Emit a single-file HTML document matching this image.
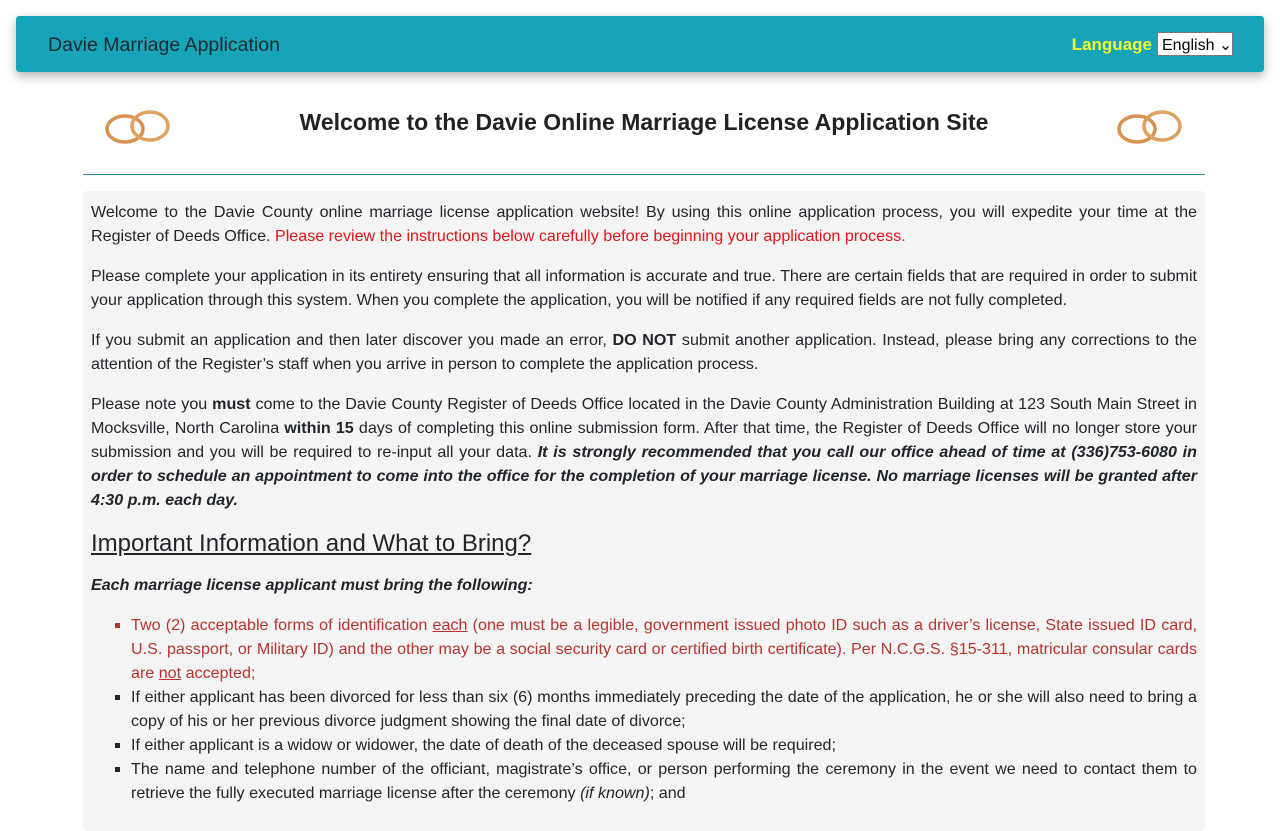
<!DOCTYPE html>
<html><head><meta charset="utf-8"><style>
body{margin:0;background:#fff;font-family:"Liberation Sans",sans-serif;color:#212529;}
.nav{position:absolute;left:16px;top:16px;width:1248px;height:56px;background:#17a3b8;border-radius:3px;box-shadow:0 4px 10px rgba(0,0,0,.3);}
.nav .t{position:absolute;left:32px;top:18px;font-size:19.5px;color:#1d2b30;}
.nav .l{position:absolute;right:112px;top:19px;font-size:17px;font-weight:bold;color:#f2ff2e;}
.nav .s{position:absolute;right:31px;top:16px;width:76px;height:24px;background:#fff;border:1px solid #777;font-size:16px;color:#000;box-sizing:border-box;padding:2px 4px;white-space:nowrap;}
h1{position:absolute;left:0;width:1288px;top:109px;margin:0;text-align:center;font-size:23px;font-weight:bold;color:#222;}
.hr{position:absolute;left:83px;top:174px;width:1122px;height:1px;background:#2a8fb0;}
.box{position:absolute;left:83px;top:191px;width:1122px;height:640px;background:#f4f4f4;border-radius:4px;padding:9px 8px;box-sizing:border-box;font-size:16.1px;line-height:24px;text-align:justify;}
p{margin:0 0 16px;}
.r{color:#e3141b}
h2{margin:17px 0 14px;font-size:24px;font-weight:normal;text-decoration:underline;line-height:30px;}
ul{margin:0;padding-left:40px;list-style:square;}
.d{color:#b8332f}
</style></head><body>
<div class="nav"><div class="t">Davie Marriage Application</div><div class="l">Language</div><div class="s">English &#8964;</div></div>
<svg style="position:absolute;left:103px;top:106px" width="70" height="42"><ellipse cx="22" cy="23" rx="18" ry="13" fill="none" stroke="#d89050" stroke-width="3.5"/><ellipse cx="47" cy="20" rx="18" ry="14" fill="none" stroke="#e0a060" stroke-width="3.5"/></svg>
<svg style="position:absolute;left:1115px;top:106px" width="70" height="42"><ellipse cx="22" cy="23" rx="18" ry="13" fill="none" stroke="#d89050" stroke-width="3.5"/><ellipse cx="47" cy="20" rx="18" ry="14" fill="none" stroke="#e0a060" stroke-width="3.5"/></svg>
<h1>Welcome to the Davie Online Marriage License Application Site</h1>
<div class="hr"></div>
<div class="box">
<p>Welcome to the Davie County online marriage license application website! By using this online application process, you will expedite your time at the Register of Deeds Office. <span class="r">Please review the instructions below carefully before beginning your application process.</span></p>
<p>Please complete your application in its entirety ensuring that all information is accurate and true. There are certain fields that are required in order to submit your application through this system. When you complete the application, you will be notified if any required fields are not fully completed.</p>
<p>If you submit an application and then later discover you made an error, <b>DO NOT</b> submit another application. Instead, please bring any corrections to the attention of the Register’s staff when you arrive in person to complete the application process.</p>
<p>Please note you <b>must</b> come to the Davie County Register of Deeds Office located in the Davie County Administration Building at 123 South Main Street in Mocksville, North Carolina <b>within 15</b> days of completing this online submission form. After that time, the Register of Deeds Office will no longer store your submission and you will be required to re-input all your data. <b><i>It is strongly recommended that you call our office ahead of time at (336)753-6080 in order to schedule an appointment to come into the office for the completion of your marriage license. No marriage licenses will be granted after 4:30 p.m. each day.</i></b></p>
<h2>Important Information and What to Bring?</h2>
<p><b><i>Each marriage license applicant must bring the following:</i></b></p>
<ul>
<li class="d">Two (2) acceptable forms of identification <u>each</u> (one must be a legible, government issued photo ID such as a driver’s license, State issued ID card, U.S. passport, or Military ID) and the other may be a social security card or certified birth certificate). Per N.C.G.S. §15-311, matricular consular cards are <u>not</u> accepted;</li>
<li>If either applicant has been divorced for less than six (6) months immediately preceding the date of the application, he or she will also need to bring a copy of his or her previous divorce judgment showing the final date of divorce;</li>
<li>If either applicant is a widow or widower, the date of death of the deceased spouse will be required;</li>
<li>The name and telephone number of the officiant, magistrate’s office, or person performing the ceremony in the event we need to contact them to retrieve the fully executed marriage license after the ceremony <i>(if known)</i>; and</li>
</ul>
</div>
</body></html>
